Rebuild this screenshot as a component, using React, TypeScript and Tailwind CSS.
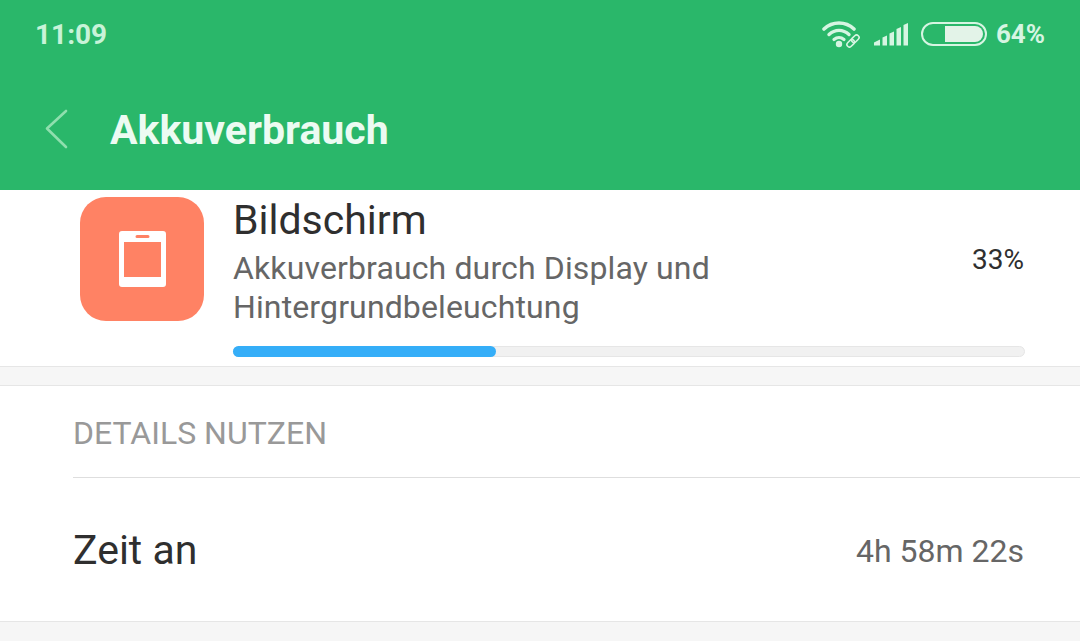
function StatusIcons() {
  return (
    <div className="flex items-center text-[#d6f5e2]">
      {/* wifi with link badge */}
      <svg width="38" height="28" viewBox="0 0 38 28" fill="none" className="mr-[13px]">
        <path d="M2 9C10.500 1 23.500 1 32 9" stroke="#d6f5e2" strokeWidth="3.600" strokeLinecap="round" />
        <path d="M7 14.500C13 9 21 9 27 14.500" stroke="#d6f5e2" strokeWidth="3.400" strokeLinecap="round" />
        <path d="M12 19.500C15 17 19 17 22 19.500" stroke="#d6f5e2" strokeWidth="3.200" strokeLinecap="round" />
        <circle cx="17" cy="24" r="3.200" fill="#d6f5e2" />
        <g transform="rotate(-45 31 21)" stroke="#d6f5e2" strokeWidth="1.600">
          <rect x="23.500" y="18.500" width="8.500" height="5" rx="2.500" />
          <rect x="30" y="18.500" width="8.500" height="5" rx="2.500" />
        </g>
      </svg>
      {/* signal bars */}
      <svg width="36" height="24" viewBox="0 0 36 24" className="mr-[12px]" fill="#d6f5e2">
        <path d="M1 23.500V20.500L7 17.500V23.500Z" />
        <path d="M9.500 23.500V15.500L14 13.500V23.500Z" />
        <path d="M16.500 23.500V11.500L21 9.500V23.500Z" />
        <path d="M23.500 23.500V7L28 5V23.500Z" />
        <path d="M30.500 23.500V3L35 1V23.500Z" />
      </svg>
      {/* battery */}
      <div className="mr-[9px] flex h-[24px] w-[66px] justify-end rounded-full border-2 border-[#d6f5e2] p-[2px]">
        <div className="h-full w-[38px] rounded-r-full bg-[#e3f3e8]" />
      </div>
      <span className="text-[26px] leading-none font-bold">64%</span>
    </div>
  );
}

function BackArrow() {
  return (
    <svg width="24" height="40" viewBox="0 0 24 40" fill="none" className="ml-[44px]">
      <path d="M22 2L3 19.500L22 38" stroke="#8fdfae" strokeWidth="2.600" strokeLinecap="round" strokeLinejoin="round" />
    </svg>
  );
}

function ScreenIcon() {
  return (
    <div className="flex h-[124px] w-[124px] shrink-0 items-center justify-center rounded-[26px] bg-[#ff8264]">
      <svg width="47" height="56" viewBox="0 0 47 56">
        <path
          fillRule="evenodd"
          fill="#fff"
          d="M3 0H44A3 3 0 0 1 47 3V53A3 3 0 0 1 44 56H3A3 3 0 0 1 0 53V3A3 3 0 0 1 3 0ZM5 11V46H42V11ZM18 4A1.500 1.500 0 0 0 18 7H29A1.500 1.500 0 0 0 29 4Z"
        />
      </svg>
    </div>
  );
}

export default function App() {
  return (
    <div className="h-[641px] w-[1080px] overflow-hidden bg-[#f6f6f6] font-['Roboto',sans-serif]">
      <header className="h-[190px] bg-[#2ab76a]">
        <div className="flex h-[68px] items-center justify-between pr-[35px] pl-[35px]">
          <span className="mt-[2px] text-[28px] leading-none font-bold text-[#c8f3d8]">11:09</span>
          <StatusIcons />
        </div>
        <div className="flex h-[122px] items-center">
          <BackArrow />
          <h1 className="mt-[2px] ml-[42px] text-[41px] leading-none font-bold text-[#ecfbf2]">
            Akkuverbrauch
          </h1>
        </div>
      </header>

      <section className="h-[177px] border-b border-[#e6e6e6] bg-white pt-[7px] pr-[55px] pl-[80px]">
        <div className="flex gap-[29px]">
          <ScreenIcon />
          <div className="min-w-0 flex-1">
            <div className="flex items-center justify-between">
              <div>
                <div className="text-[41px] leading-[46px] text-[#2f2f2f]">Bildschirm</div>
                <p className="mt-[6px] text-[32px] leading-[39px] tracking-[0.13px] text-[#666666]">
                  Akkuverbrauch durch Display und
                  <br />
                  Hintergrundbeleuchtung
                </p>
              </div>
              <span className="mt-[-4px] mr-[1px] text-[28px] text-[#2f2f2f]">33%</span>
            </div>
            <div className="mt-[19px] h-[11px] w-full rounded-full border border-[#e6e6e6] bg-[#f1f1f1]">
              <div className="-m-px h-[11px] w-[263px] rounded-full bg-[#35aef8]" />
            </div>
          </div>
        </div>
      </section>

      <div className="h-[18px]" />

      <section className="h-[237px] border-y border-[#e6e6e6] bg-white pl-[73px]">
        <div className="flex h-[92px] items-center border-b border-[#dedede] pt-[2px]">
          <span className="text-[32px] leading-none text-[#999999]">DETAILS NUTZEN</span>
        </div>
        <div className="flex h-[143px] items-center justify-between pt-[2px] pr-[56px]">
          <span className="text-[41px] leading-none text-[#2f2f2f]">Zeit an</span>
          <span className="text-[32px] leading-none text-[#666666]">4h 58m 22s</span>
        </div>
      </section>
    </div>
  );
}
